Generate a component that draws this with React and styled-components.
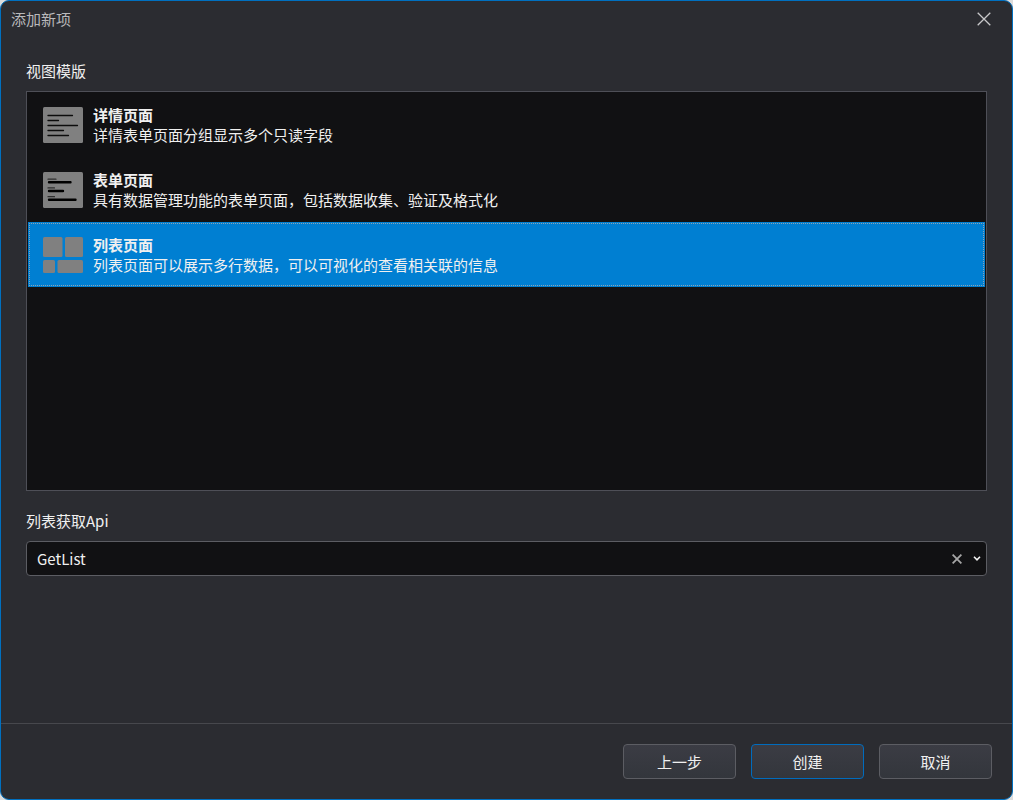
import { useState } from "react";
import styled, { createGlobalStyle } from "styled-components";

const GlobalStyle = createGlobalStyle`
  *,
  *::before,
  *::after {
    box-sizing: border-box;
  }
  body {
    margin: 0;
    background-color: #dcdcdc;
  }
  body,
  button,
  select {
    font-family: "Noto Sans CJK SC", "Open Sans", sans-serif;
    font-size: 15px;
    line-height: 20px;
  }
`;

const Dialog = styled.div`
  min-height: 100vh;
  display: flex;
  flex-direction: column;
  background-color: #2b2c31;
  border: 1px solid #0070c0;
  border-radius: 9px;
  color: #f0f0f0;
  overflow: hidden;
`;

const TitleBar = styled.header`
  display: flex;
  justify-content: space-between;
  align-items: center;
  height: 36px;
  padding: 0 17px 0 10px;
`;

const Title = styled.h1`
  margin: 0;
  font-size: 15px;
  font-weight: 400;
  color: #b9b9bb;
`;

const IconButton = styled.button`
  display: flex;
  align-items: center;
  justify-content: center;
  width: 22px;
  height: 22px;
  padding: 0;
  border: none;
  background: none;
  color: ${(props) => props.$color};
  cursor: pointer;
`;

const Content = styled.main`
  flex: 1;
  display: flex;
  flex-direction: column;
  padding: 24px 25px;
`;

const Group = styled.fieldset`
  min-width: 0;
  margin: 0 0 20px;
  padding: 0;
  border: none;
`;

const Legend = styled.legend`
  padding: 0;
  margin-bottom: 10px;
`;

const List = styled.div`
  height: 50vh;
  min-height: 200px;
  padding: 0 1px;
  background-color: #111113;
  border: 1px solid #4e4f57;
  overflow: auto;
`;

const Row = styled.label`
  display: flex;
  align-items: center;
  gap: 10px;
  height: 65px;
  padding: 0 14px;
  border: 1px solid transparent;
  cursor: pointer;

  &:has(input:checked) {
    background-color: #007fd2;
    border-color: #007fd2;
    outline: 1px dotted #8fa3b0;
    outline-offset: -2px;
  }
`;

const Radio = styled.input`
  appearance: none;
  position: absolute;
  margin: 0;
`;

const RowText = styled.span`
  display: flex;
  flex-direction: column;
`;

const RowName = styled.strong`
  font-weight: 700;
`;

const FieldLabel = styled.label`
  margin-bottom: 10px;
`;

const ComboBox = styled.div`
  display: grid;
  grid-template-columns: 1fr auto 18px;
  align-items: center;
  height: 35px;
  background-color: #111113;
  border: 1px solid #5c5d63;
  border-radius: 4px;
`;

const Select = styled.select`
  grid-area: 1 / 1 / 2 / 4;
  appearance: none;
  width: 100%;
  height: 33px;
  padding: 0 50px 0 10px;
  border: none;
  border-radius: 4px;
  background: none;
  color: #f0f0f0;
`;

const ClearSlot = styled.div`
  grid-area: 1 / 2;
`;

const Arrow = styled.svg`
  grid-area: 1 / 3;
  justify-self: center;
  pointer-events: none;
`;

const Footer = styled.footer`
  display: flex;
  justify-content: flex-end;
  gap: 15px;
  padding: 20px;
  border-top: 1px solid #47484d;
`;

const Button = styled.button`
  width: 113px;
  height: 35px;
  padding: 0;
  background: linear-gradient(#3b3c44, #33363c);
  border: 1px solid ${(props) => (props.$primary ? "#006cbe" : "#5c5d63")};
  border-radius: 4px;
  color: #f0f0f0;
  cursor: pointer;
`;

const DetailIcon = () => (
  <svg width="40" height="36" viewBox="0 0 40 36" aria-hidden="true">
    <rect width="40" height="36" rx="1.5" fill="#808080" />
    <path
      d="M5 8.500h24.500M5 13.500h10.500M5 18.500h29.500M5 23.500h15.500M5 28.500h20.500"
      stroke="#0c0c0c"
      strokeWidth="1.300"
      strokeLinecap="round"
    />
  </svg>
);

const FormIcon = () => (
  <svg width="40" height="36" viewBox="0 0 40 36" aria-hidden="true">
    <rect width="40" height="36" rx="1.5" fill="#808080" />
    <path
      d="M5 7.200h8M5 15.900h6.500M5 24.700h6.500"
      stroke="#2e2e2e"
      strokeWidth="1.200"
      strokeLinecap="round"
    />
    <path
      d="M6 10.300h21.500M6 19h14M6 27.800h26.500"
      stroke="#000"
      strokeWidth="2.400"
      strokeLinecap="round"
    />
  </svg>
);

const ListIcon = () => (
  <svg width="40" height="36" viewBox="0 0 40 36" fill="#808080" aria-hidden="true">
    <rect width="19.500" height="20" rx="1.5" />
    <rect x="22" width="18" height="20" rx="1.5" />
    <rect y="23" width="12" height="13" rx="1.5" />
    <rect x="14.500" y="23" width="25.500" height="13" rx="1.5" />
  </svg>
);

const templates = [
  {
    id: "detail",
    name: "详情页面",
    text: "详情表单页面分组显示多个只读字段",
    Icon: DetailIcon,
  },
  {
    id: "form",
    name: "表单页面",
    text: "具有数据管理功能的表单页面，包括数据收集、验证及格式化",
    Icon: FormIcon,
  },
  {
    id: "list",
    name: "列表页面",
    text: "列表页面可以展示多行数据，可以可视化的查看相关联的信息",
    Icon: ListIcon,
  },
];

const App = () => {
  const [template, setTemplate] = useState("list");
  const [api, setApi] = useState("GetList");

  return (
    <>
      <GlobalStyle />
      <Dialog role="dialog" aria-labelledby="title">
        <TitleBar>
          <Title id="title">添加新项</Title>
          <IconButton type="button" aria-label="关闭" $color="#c8c8ca">
            <svg width="14" height="14" viewBox="0 0 14 14" aria-hidden="true">
              <path d="M.7.7l12.600 12.600M13.300.7L.7 13.300" stroke="currentColor" strokeWidth="1.300" />
            </svg>
          </IconButton>
        </TitleBar>
        <Content>
          <Group>
            <Legend>视图模版</Legend>
            <List>
              {templates.map(({ id, name, text, Icon }) => (
                <Row key={id}>
                  <Radio
                    type="radio"
                    name="template"
                    value={id}
                    checked={template === id}
                    onChange={() => setTemplate(id)}
                  />
                  <Icon />
                  <RowText>
                    <RowName>{name}</RowName>
                    <span>{text}</span>
                  </RowText>
                </Row>
              ))}
            </List>
          </Group>
          <FieldLabel htmlFor="api">列表获取Api</FieldLabel>
          <ComboBox>
            <Select id="api" value={api} onChange={(e) => setApi(e.target.value)}>
              <option value=""></option>
              <option value="GetList">GetList</option>
            </Select>
            <ClearSlot>
              <IconButton
                type="button"
                aria-label="清除"
                $color="#a6a6a6"
                onClick={() => setApi("")}
              >
                <svg width="10" height="10" viewBox="0 0 10 10" aria-hidden="true">
                  <path d="M.6.6l8.800 8.800M9.400.6L.6 9.400" stroke="currentColor" strokeWidth="1.800" />
                </svg>
              </IconButton>
            </ClearSlot>
            <Arrow width="8" height="5" viewBox="0 0 8 5" aria-hidden="true">
              <path d="M1 .8l3 3 3-3" fill="none" stroke="#f4f4f4" strokeWidth="1.600" />
            </Arrow>
          </ComboBox>
        </Content>
        <Footer>
          <Button type="button">上一步</Button>
          <Button type="button" $primary>
            创建
          </Button>
          <Button type="button">取消</Button>
        </Footer>
      </Dialog>
    </>
  );
};

export default App;
